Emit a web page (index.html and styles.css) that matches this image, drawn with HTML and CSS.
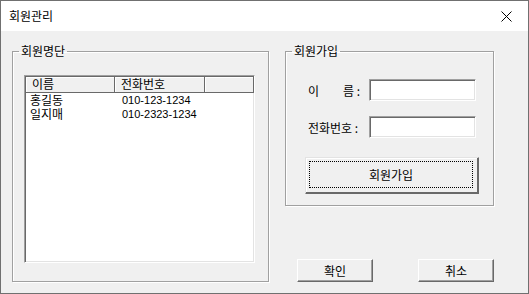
FILE: index.html
```html
<!DOCTYPE html>
<html>
<head>
<meta charset="utf-8">
<title>회원관리</title>
<link rel="stylesheet" href="styles.css">
</head>
<body>
<div class="window">
  <div class="titlebar">
    <span class="title">회원관리</span>
    <svg class="close" width="11" height="11" viewBox="0 0 11 11">
      <path d="M0.5 0.5 L10.5 10.5 M10.5 0.5 L0.5 10.5" stroke="#000" stroke-width="1" fill="none"/>
    </svg>
  </div>
  <div class="client">
    <fieldset class="group list_group">
      <legend>회원명단</legend>
      <div class="group_body">
        <div class="listview">
          <div class="lv_header">
            <div class="lv_col col_name">이름</div>
            <div class="lv_col col_phone">전화번호</div>
            <div class="lv_col col_rest"></div>
          </div>
          <div class="lv_row">
            <div class="col_name">홍길동</div>
            <div class="col_phone">010-123-1234</div>
          </div>
          <div class="lv_row">
            <div class="col_name">일지매</div>
            <div class="col_phone">010-2323-1234</div>
          </div>
        </div>
      </div>
    </fieldset>
    <div class="right_col">
      <fieldset class="group join_group">
        <legend>회원가입</legend>
        <div class="group_body">
          <div class="field_row">
            <label class="field_label" for="userName"><span>이</span><span>름 :</span></label>
            <input type="text" id="userName" class="sunken">
          </div>
          <div class="field_row">
            <label class="field_label" for="userPhone"><span>전화번호 :</span></label>
            <input type="text" id="userPhone" class="sunken">
          </div>
          <button type="button" class="btn btn_default">
            <span class="focus_rect">회원가입</span>
          </button>
        </div>
      </fieldset>
      <div class="dlg_buttons">
        <button type="button" class="btn btn_small">확인</button>
        <button type="button" class="btn btn_small">취소</button>
      </div>
    </div>
  </div>
</div>
</body>
</html>
```

FILE: styles.css
```css
*{
  box-sizing: border-box;
}
body {
  margin: 0;
  font-family: "Noto Sans CJK KR", "Liberation Sans", sans-serif;
  font-size: 12px;
  color: #000;
}
.window {
  width: 529px;
  height: 294px;
  border: 1px solid #707070;
  display: flex;
  flex-direction: column;
}
.titlebar {
  height: 30px;
  background-color: #fff;
  display: flex;
  align-items: center;
  justify-content: space-between;
  padding: 0 16px 0 8px;
}
.title {
  font-size: 12px;
  line-height: 14px;
}
.close {
  display: block;
}
.client {
  flex: 1;
  background-color: #f0f0f0;
  display: flex;
  padding: 13px 0 0 11px;
}

/* group boxes */
.group {
  margin: 0;
  padding: 0;
  border: 1px solid #a0a0a0;
  box-shadow: 1px 1px 0 #fff, inset 1px 1px 0 #fff;
}
.group legend {
  margin-left: 6px;
  padding: 0 2px;
  font-size: 12px;
  line-height: 14px;
}
.list_group {
  width: 257px;
  height: 238px;
}
.list_group .group_body {
  padding: 17px 0 0 11px;
}
.right_col {
  width: 209px;
  margin-left: 16px;
  display: flex;
  flex-direction: column;
}
.join_group {
  height: 162px;
}
.join_group .group_body {
  padding: 21px 0 0 22px;
}

/* list view */
.listview {
  width: 231px;
  height: 188px;
  background-color: #fff;
  border: 1px solid;
  border-color: #a0a0a0 #fff #fff #a0a0a0;
  box-shadow: inset 1px 1px 0 #696969, inset -1px -1px 0 #e3e3e3;
  padding: 1px 0 0 1px;
  overflow: hidden;
}
.lv_header {
  display: flex;
  height: 16px;
}
.lv_col {
  background-color: #f0f0f0;
  border-right: 1px solid #696969;
  border-bottom: 1px solid #696969;
  box-shadow: inset 1px 1px 0 #fff;
  line-height: 14px;
  padding-left: 6px;
}
.col_name {
  width: 89px;
}
.col_phone {
  width: 90px;
}
.col_rest {
  flex: 1;
}
.lv_row {
  display: flex;
  line-height: 14px;
}
.lv_row .col_name {
  padding-left: 4px;
}
.lv_row .col_phone {
  padding-left: 7px;
  font-family: "Liberation Sans", sans-serif;
  font-size: 11px;
}

/* fields */
.field_row {
  display: flex;
  align-items: center;
  margin-bottom: 15px;
}
.field_label {
  width: 52px;
  margin-right: 9px;
  display: flex;
  justify-content: space-between;
  white-space: nowrap;
}
.sunken {
  width: 107px;
  height: 22px;
  margin: 0;
  background-color: #fff;
  border: 1px solid;
  border-color: #a0a0a0 #fff #fff #a0a0a0;
  box-shadow: inset 1px 1px 0 #696969, inset -1px -1px 0 #e3e3e3;
  outline: none;
}

/* buttons */
.btn {
  margin: 0;
  padding: 0;
  font-family: inherit;
  font-size: 12px;
  color: #000;
  background-color: #f0f0f0;
  border: 1px solid;
  border-color: #fff #696969 #696969 #fff;
  box-shadow: inset -1px -1px 0 #a0a0a0;
  cursor: pointer;
}
.btn_default {
  width: 174px;
  height: 37px;
  margin: 4px 0 0 -3px;
  padding: 3px 5px 5px 3px;
  border-color: #e3e3e3 #696969 #696969 #e3e3e3;
  box-shadow: inset -1px -1px 0 #696969, inset 1px 1px 0 #fff;
}
.focus_rect {
  display: flex;
  align-items: center;
  justify-content: center;
  height: 100%;
  border: 1px dotted #000;
}
.dlg_buttons {
  display: flex;
  justify-content: space-between;
  padding-left: 12px;
  margin-top: 53px;
}
.btn_small {
  width: 76px;
  height: 23px;
}
```
